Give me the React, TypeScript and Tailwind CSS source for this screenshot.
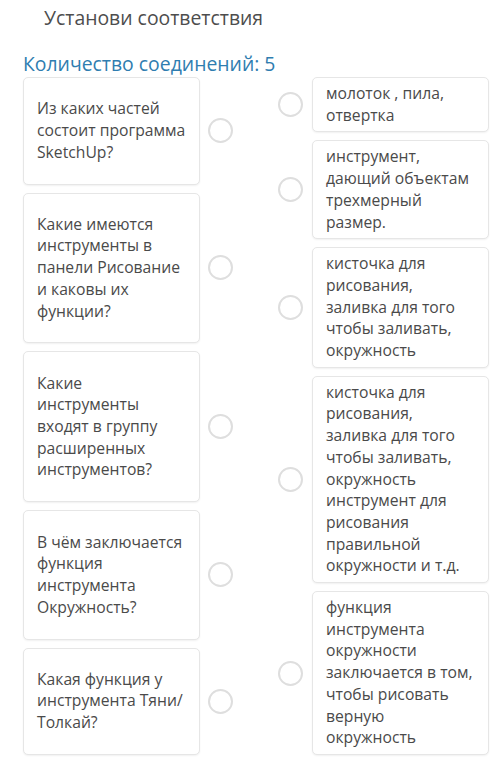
import React from "react";

const left: string[][] = [
  ["Из каких частей", "состоит программа", "SketchUp?"],
  ["Какие имеются", "инструменты в", "панели Рисование", "и каковы их", "функции?"],
  ["Какие", "инструменты", "входят в группу", "расширенных", "инструментов?"],
  ["В чём заключается", "функция", "инструмента", "Окружность?"],
  ["Какая функция у", "инструмента Тяни/", "Толкай?"],
];

const right: string[][] = [
  ["молоток , пила,", "отвертка"],
  ["инструмент,", "дающий объектам", "трехмерный", "размер."],
  ["кисточка для", "рисования,", "заливка для того", "чтобы заливать,", "окружность"],
  [
    "кисточка для",
    "рисования,",
    "заливка для того",
    "чтобы заливать,",
    "окружность",
    "инструмент для",
    "рисования",
    "правильной",
    "окружности и т.д.",
  ],
  ["функция", "инструмента", "окружности", "заключается в том,", "чтобы рисовать", "верную", "окружность"],
];

function Circle() {
  return <div className="w-[25px] h-[25px] shrink-0 rounded-full border-2 border-[#dedede] bg-white" />;
}

export default function App() {
  return (
    <div
      className="w-[500px] h-[774px] bg-white text-[#4a4a4a] overflow-hidden"
      style={{ fontFamily: '"Open Sans", "Noto Sans", sans-serif' }}
    >
      <div className="pl-[44px] pt-[5px] text-[19.4px] leading-[26px] text-[#4d4d4d]">Установи соответствия</div>
      <div className="pl-[23px] mt-[20px] text-[19.4px] leading-[26px] text-[#2f7db0]">Количество соединений: 5</div>
      <div className="flex pl-[23px]">
        <div className="flex flex-col gap-[8px]">
          {left.map((lines, i) => (
            <div key={i} className="grow flex items-stretch">
              <div className="w-[177px] flex flex-col justify-center px-[13px] rounded-[5px] border border-[#e6e6e6] bg-white shadow-[0_1px_2px_rgba(0,0,0,0.06)] text-[15.7px] leading-[21.7px]">
                {lines.map((l, j) => (
                  <div key={j} className="whitespace-nowrap">{l}</div>
                ))}
              </div>
              <div className="ml-[8px] w-[25px] flex items-center">
                <Circle />
              </div>
            </div>
          ))}
        </div>
        <div className="flex flex-col gap-[8px] ml-[45px]">
          {right.map((lines, i) => (
            <div key={i} className="flex items-center">
              <div className="w-[25px] flex items-center">
                <Circle />
              </div>
              <div className="ml-[9px] w-[177px] py-[5px] px-[13px] rounded-[5px] border border-[#e6e6e6] bg-white shadow-[0_1px_2px_rgba(0,0,0,0.06)] text-[15.7px] leading-[21.7px]">
                {lines.map((l, j) => (
                  <div key={j} className="whitespace-nowrap">{l}</div>
                ))}
              </div>
            </div>
          ))}
        </div>
      </div>
    </div>
  );
}
